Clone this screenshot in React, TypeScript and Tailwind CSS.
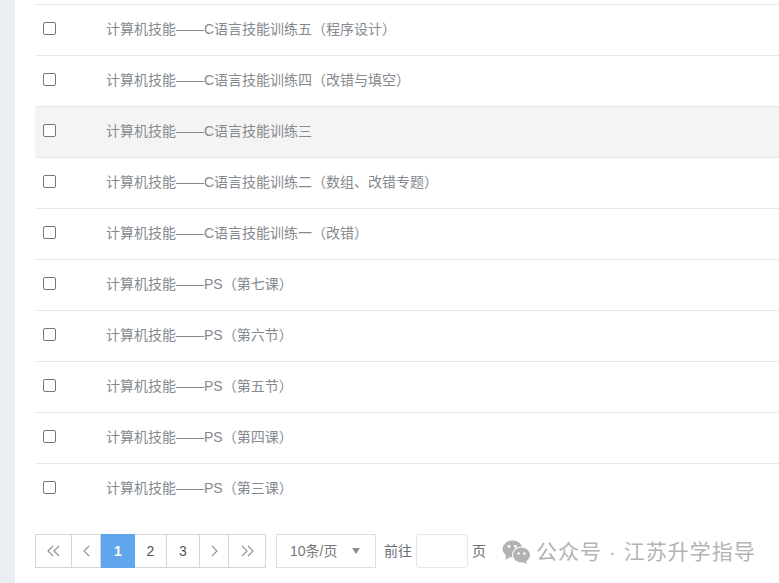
const font = { fontFamily: '"Liberation Sans", "Noto Sans CJK SC", sans-serif' };
const rows = [
  "计算机技能——C语言技能训练五（程序设计）",
  "计算机技能——C语言技能训练四（改错与填空）",
  "计算机技能——C语言技能训练三",
  "计算机技能——C语言技能训练二（数组、改错专题）",
  "计算机技能——C语言技能训练一（改错）",
  "计算机技能——PS（第七课）",
  "计算机技能——PS（第六节）",
  "计算机技能——PS（第五节）",
  "计算机技能——PS（第四课）",
  "计算机技能——PS（第三课）",
];

function Chevron({ dir, double }: { dir: "l" | "r"; double?: boolean }) {
  const a = dir === "l" ? "M7 1 L2 6 L7 11" : "M2 1 L7 6 L2 11";
  const b = dir === "l" ? "M13 1 L8 6 L13 11" : "M8 1 L13 6 L8 11";
  return (
    <svg width={double ? 15 : 9} height="12" viewBox={double ? "0 0 15 12" : "0 0 9 12"} fill="none" stroke="#8b9199" strokeWidth="1.1">
      <path d={a} />
      {double && <path d={b} />}
    </svg>
  );
}

export default function App() {
  const cell = "flex h-full items-center justify-center border-y border-r border-[#d4d7da] text-[14px] text-[#555]";
  return (
    <div className="flex h-[583px] w-[779px] overflow-hidden bg-white" style={font}>
      <div className="h-full w-[15px] shrink-0 bg-[#e9eef3]" />
      <div className="min-w-0 flex-1 pl-[20px] pt-[4px]">
        {rows.map((t, i) => (
          <div
            key={t}
            className={`flex h-[51px] items-center border-t border-[#e6e8ea] ${i === 2 ? "bg-[#f4f4f4]" : ""}`}
          >
            <span className="mb-[3px] ml-[8px] h-[13px] w-[13px] shrink-0 rounded-[2px] border border-[#767676] bg-white" />
            <span className="mb-[2px] ml-[50px] whitespace-nowrap text-[14px] text-[#858a90]">{t}</span>
          </div>
        ))}
        <div className="mt-[20px] flex h-[34px] items-center">
          <div className="flex h-full">
            <div className={`${cell} w-[37px] border-l`}><Chevron dir="l" double /></div>
            <div className={`${cell} w-[29px]`}><Chevron dir="l" /></div>
            <div className="flex h-full w-[34px] items-center justify-center bg-[#5fa6ec] text-[14px] font-bold text-white">1</div>
            <div className={`${cell} w-[32px]`}>2</div>
            <div className={`${cell} w-[33px]`}>3</div>
            <div className={`${cell} w-[29px]`}><Chevron dir="r" /></div>
            <div className={`${cell} w-[37px]`}><Chevron dir="r" double /></div>
          </div>
          <div className="ml-[10px] flex h-full w-[100px] items-center justify-between border border-[#dcdfe2] pl-[13px] pr-[15px] text-[14px] text-[#777]">
            <span>10条/页</span>
            <span className="h-0 w-0 border-x-[4px] border-t-[6px] border-x-transparent border-t-[#8a8e93]" />
          </div>
          <span className="ml-[8px] text-[14px] text-[#666e78]">前往</span>
          <div className="ml-[4px] h-full w-[52px] rounded-[3px] border border-[#e4e7ea]" />
          <span className="ml-[4px] text-[14px] text-[#666e78]">页</span>
          <div className="ml-[16px] flex items-center pt-[2px]">
            <svg width="29" height="24" viewBox="0 0 29 24" fill="#b2b2b2">
              <ellipse cx="10.5" cy="9" rx="10" ry="8.5" />
              <path d="M4 14 L3.5 20 L9 16.5 Z" />
              <ellipse cx="19.5" cy="15" rx="9.5" ry="8.5" fill="#fff" />
              <ellipse cx="19.5" cy="15" rx="8.5" ry="7.5" />
              <path d="M23.5 20 L25 24 L19.5 21.5 Z" />
              <circle cx="7" cy="6.5" r="1.4" fill="#fff" />
              <circle cx="13.5" cy="6.5" r="1.4" fill="#fff" />
              <circle cx="16.5" cy="13.5" r="1.2" fill="#fff" />
              <circle cx="22.5" cy="13.5" r="1.2" fill="#fff" />
            </svg>
            <span className="ml-[5px] whitespace-nowrap text-[21px] tracking-[1px] text-[#b4b4b4]">公众号 · 江苏升学指导</span>
          </div>
        </div>
      </div>
    </div>
  );
}
